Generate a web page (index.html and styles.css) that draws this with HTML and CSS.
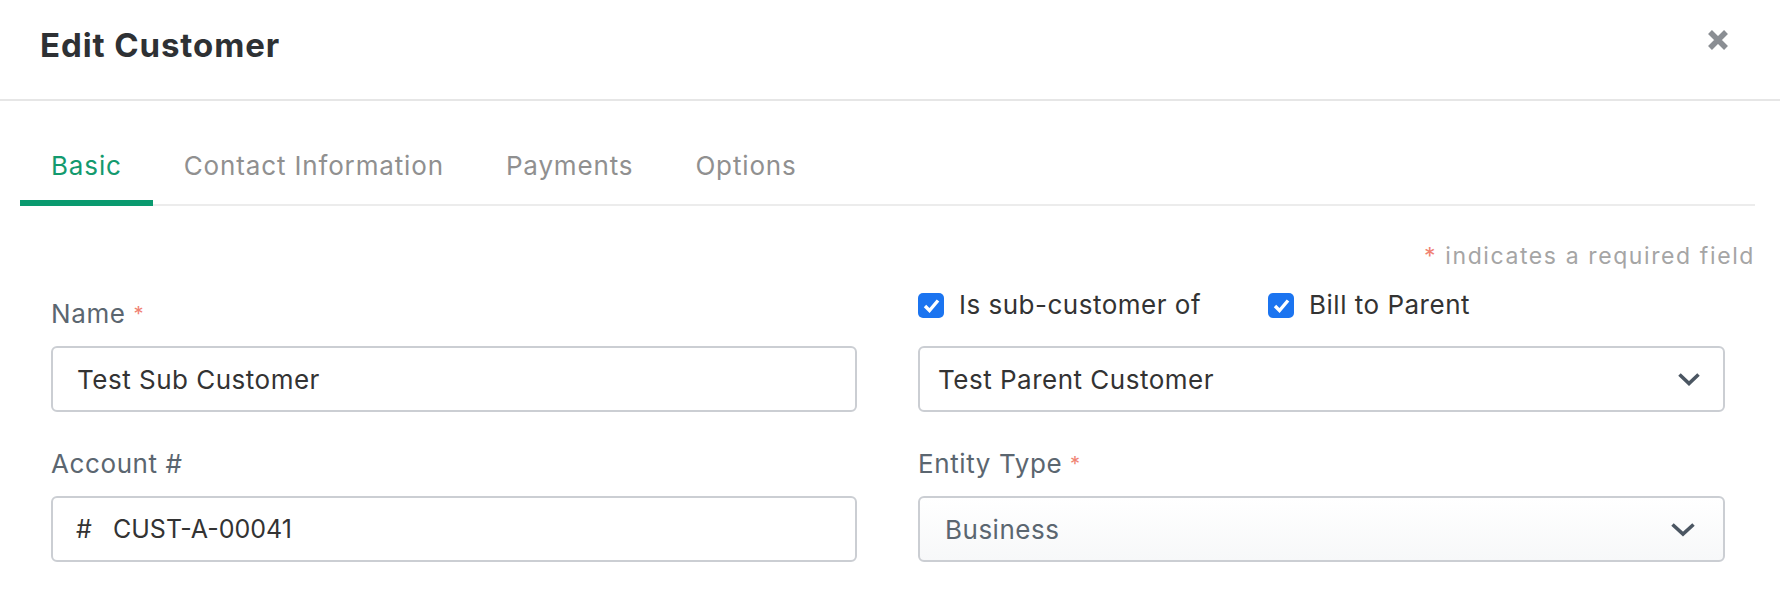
FILE: index.html
```html
<!DOCTYPE html>
<html lang="en">
<head>
  <meta charset="UTF-8" />
  <title>Edit Customer</title>
  <link rel="stylesheet" href="styles.css">
</head>
<body>
  <div class="modal">
    <div class="modal-header">
      <h1>Edit Customer</h1>
      <button class="close-btn" aria-label="Close">
        <svg width="22" height="20" viewBox="0 0 22 20">
          <path d="M3 2 L19 18 M19 2 L3 18" stroke="#8a8e93" stroke-width="5.5" stroke-linecap="butt" />
        </svg>
      </button>
    </div>

    <div class="tabs">
      <a class="tab active">Basic</a>
      <a class="tab">Contact Information</a>
      <a class="tab">Payments</a>
      <a class="tab">Options</a>
    </div>

    <p class="required-note"><span class="req">*</span> indicates a required field</p>

    <form class="form-grid">
      <label class="field-label name-label">Name <span class="req">*</span></label>
      <div class="check-row">
        <label class="check"><span class="box"><svg width="17" height="15" viewBox="0 0 17 15"><path d="M2 8 L6.5 12.5 L15 2.5" fill="none" stroke="#fff" stroke-width="3.4" /></svg></span>Is sub-customer of</label>
        <label class="check"><span class="box"><svg width="17" height="15" viewBox="0 0 17 15"><path d="M2 8 L6.5 12.5 L15 2.5" fill="none" stroke="#fff" stroke-width="3.4" /></svg></span>Bill to Parent</label>
      </div>

      <div class="input">Test Sub Customer</div>
      <div class="input select">
        <span>Test Parent Customer</span>
        <svg class="chevron" width="24" height="15" viewBox="0 0 24 15"><path d="M2.5 2.5 L12 11.5 L21.5 2.5" fill="none" stroke="#4b5662" stroke-width="3.6" /></svg>
      </div>

      <label class="field-label">Account #</label>
      <label class="field-label">Entity Type <span class="req">*</span></label>

      <div class="input account"><span class="prefix">#</span>CUST-A-00041</div>
      <div class="input select native">
        <span>Business</span>
        <svg class="chevron" width="26" height="15" viewBox="0 0 26 15"><path d="M2.5 2.5 L13 12 L23.5 2.5" fill="none" stroke="#4b5662" stroke-width="3.6" /></svg>
      </div>
    </form>
  </div>
</body>
</html>
```

FILE: styles.css
```css
body {
  margin: 0;
  font-family: Inter, "Liberation Sans", sans-serif;
  background: #fff;
  color: #333;
}

.modal-header {
  display: flex;
  align-items: center;
  justify-content: space-between;
  height: 99px;
  padding: 0 51px 0 40px;
  border-bottom: 2px solid #e6e6e6;
}
.modal-header h1 {
  margin: 0 0 10px;
  font-size: 33px;
  font-weight: 700;
  letter-spacing: 0.9px;
  color: #2e3134;
}
.close-btn {
  background: none;
  border: none;
  padding: 0;
  margin-bottom: 16px;
  cursor: pointer;
}

.tabs {
  display: flex;
  margin: 0 25px 0 20px;
  border-bottom: 2px solid #ececec;
}
.tab {
  padding: 50px 31px 19px;
  font-size: 26px;
  line-height: 30px;
  letter-spacing: 0.85px;
  color: #909090;
  border-bottom: 6px solid transparent;
  margin-bottom: -2px;
}
.tab.active {
  color: #139a6e;
  border-bottom-color: #0a9a6f;
}

.required-note {
  margin: 36px 25px 0 0;
  text-align: right;
  font-size: 23px;
  line-height: 28px;
  letter-spacing: 1.6px;
  color: #a5a5a5;
}
.req {
  color: #f08272;
}

.form-grid {
  display: grid;
  grid-template-columns: 806px 807px;
  column-gap: 61px;
  margin: 0 0 0 51px;
}
.field-label {
  align-self: end;
  font-size: 26px;
  line-height: 30px;
  letter-spacing: 0.6px;
  color: #5b6670;
  margin-bottom: 17px;
}
.name-label {
  margin-top: 29px;
}
.field-label .req {
  font-size: 20px;
  vertical-align: top;
}

.check-row {
  align-self: end;
  display: flex;
  gap: 67px;
  margin-bottom: 26px;
}
.check {
  display: flex;
  align-items: center;
  gap: 15px;
  font-size: 26px;
  line-height: 30px;
  letter-spacing: 0.5px;
  color: #333;
}
.check .box {
  width: 26px;
  height: 25px;
  border-radius: 5px;
  background: #1b74f0;
  display: flex;
  align-items: center;
  justify-content: center;
}

.input {
  box-sizing: border-box;
  height: 66px;
  border: 2px solid #cbced3;
  border-radius: 6px;
  display: flex;
  align-items: center;
  padding: 0 24px;
  font-size: 26px;
  letter-spacing: 0.5px;
  color: #333;
  margin-bottom: 37px;
}
.select {
  justify-content: space-between;
  padding: 0 22px 0 18px;
}
.select.native {
  padding: 0 27px 0 25px;
  background: linear-gradient(#fff, #f7f8f9);
  color: #5b6670;
}
.account {
  padding-left: 23px;
  font-size: 25px;
  letter-spacing: 0;
}
.prefix {
  width: 37px;
}
.chevron {
  display: block;
}
```
